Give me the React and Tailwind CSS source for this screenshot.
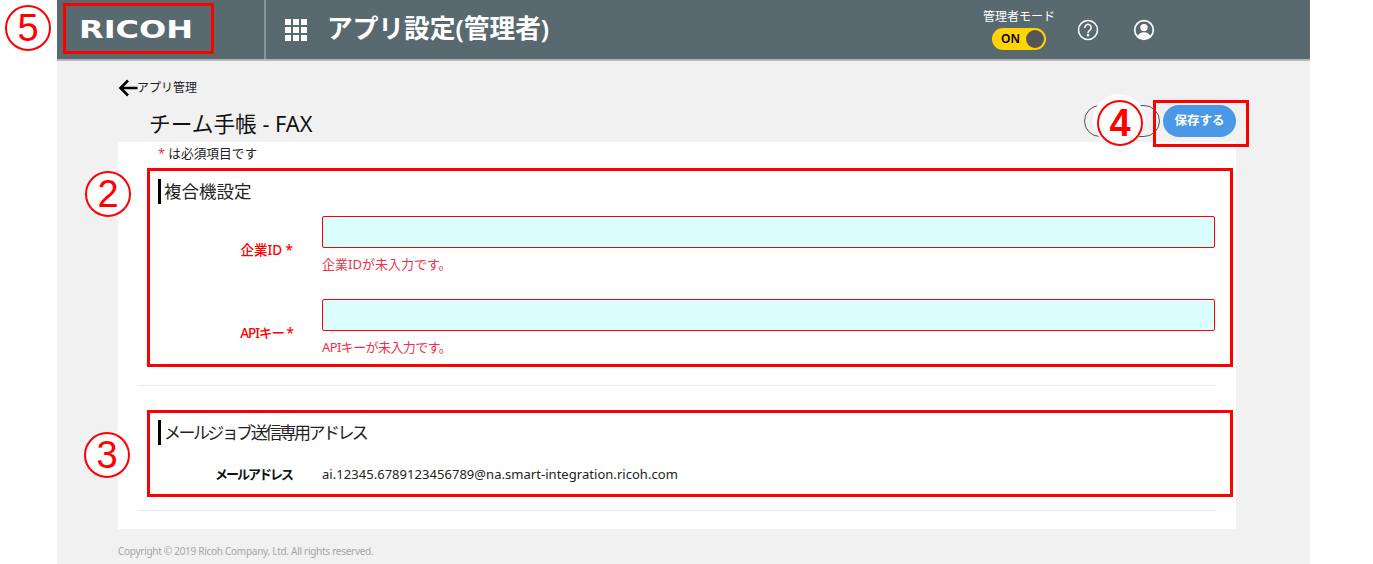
import React from "react";

const font = { fontFamily: '"Noto Sans", "Noto Sans CJK JP", sans-serif' };

function Badge({ n, className }) {
  return (
    <div className={`absolute flex items-center justify-center rounded-full border-2 border-[#ff0000] bg-white text-[#ff0000] w-[46px] h-[46px] text-[38px] leading-none ${className}`}
      style={{ fontFamily: '"Liberation Sans", sans-serif' }}>
      {n}
    </div>
  );
}

function SectionTitle({ children, className }) {
  return (
    <div className="flex items-center h-[25px]">
      <span className="w-[3px] h-[25px] bg-black" />
      <h2 className={`ml-[3px] leading-[25px] text-[#222] font-normal whitespace-nowrap ${className}`}>{children}</h2>
    </div>
  );
}

function Field({ label, error, labelClass, errorClass }) {
  return (
    <div className="flex">
      <label className={`w-[135px] pt-[24px] text-right text-[13.500px] leading-[20px] font-medium text-[#ff0000] ${labelClass}`}>{label} *</label>
      <div className="ml-[29px] flex-1">
        <div className="h-[32px] rounded-[2px] border border-[#ff0000] bg-[#dbfeff]" />
        <p className={`mt-[5px] text-[13px] leading-[22px] text-[#f0304a] ${errorClass}`}>{error}</p>
      </div>
    </div>
  );
}

export default function App() {
  return (
    <div className="relative w-[1373px] h-[564px] overflow-hidden bg-white" style={font}>
      <div className="ml-[57px] w-[1253px] h-[564px] bg-[#f1f1f1]">
        <header className="flex items-center h-[61px] bg-[#586a70] border-b-2 border-[#b7b7b7]">
          <div className="w-[209px] h-full border-r-2 border-[#8a9396] flex items-center pl-[22px]">
            <span className="text-white text-[25px] font-bold leading-none scale-x-[1.28] origin-left" style={{ fontFamily: '"DejaVu Sans", sans-serif' }}>RICOH</span>
          </div>
          <svg className="ml-[19px]" width="22" height="22" viewBox="0 0 22 22" fill="#fff">
            <rect x="0" y="0" width="6" height="6" /><rect x="8" y="0" width="6" height="6" /><rect x="16" y="0" width="6" height="6" />
            <rect x="0" y="8" width="6" height="6" /><rect x="8" y="8" width="6" height="6" /><rect x="16" y="8" width="6" height="6" />
            <rect x="0" y="16" width="6" height="6" /><rect x="8" y="16" width="6" height="6" /><rect x="16" y="16" width="6" height="6" />
          </svg>
          <h1 className="ml-[20px] text-white text-[25.700px] font-semibold leading-none -mt-[2px]">アプリ設定(管理者)</h1>
          <div className="ml-auto flex items-center mr-[155px]">
            <div className="flex flex-col items-center w-[72px] translate-x-[1px]">
              <span className="text-white text-[12px] leading-[16px] whitespace-nowrap">管理者モード</span>
              <div className="mt-[3px] w-[54px] h-[22px] rounded-full bg-[#ffd400] flex items-center justify-between pl-[9px] pr-[2px]">
                <span className="text-[12px] font-semibold text-black leading-none">ON</span>
                <span className="w-[18px] h-[18px] rounded-full bg-[#55565a]" />
              </div>
            </div>
            <svg className="ml-[23px]" width="22" height="22" viewBox="0 0 22 22" fill="none" stroke="#fff" strokeWidth="1.5">
              <circle cx="11" cy="11" r="9.500" />
              <path d="M7.800 8.600a3.200 3.200 0 1 1 4.900 2.700c-1 .6-1.700 1.200-1.700 2.500" strokeLinecap="round" />
              <circle cx="11" cy="16.300" r="0.500" fill="#fff" />
            </svg>
            <svg className="ml-[34px]" width="22" height="22" viewBox="0 0 22 22">
              <circle cx="11" cy="11" r="9.300" fill="none" stroke="#fff" strokeWidth="1.700" />
              <circle cx="11" cy="8.600" r="3.700" fill="#fff" />
              <path d="M4.600 17.200c1-2.900 3.400-4 6.400-4s5.400 1.100 6.400 4a9 9 0 0 1-12.800 0z" fill="#fff" />
            </svg>
          </div>
        </header>

        <main className="pl-[61px] pr-[74px]">
          <div className="flex items-center h-[24px] mt-[15px]">
            <svg width="20" height="20" viewBox="0 0 20 20" fill="none" stroke="#000" strokeWidth="2.600">
              <path d="M19.500 10H3M10 2.500 2.500 10l7.500 7.500" />
            </svg>
            <span className="text-[12px] text-[#222] leading-none -ml-[1px]">アプリ管理</span>
          </div>
          <div className="flex items-center h-[32px] mt-[5px]">
            <h2 className="ml-[31px] mt-[6px] text-[21.700px] leading-none text-[#111] font-normal">チーム手帳 - FAX</h2>
            <div className="ml-auto flex gap-[3px]">
              <button className="w-[76px] h-[32px] rounded-full border border-[#555] bg-transparent" />
              <button className="w-[73px] h-[32px] rounded-full bg-[#4a98e8] text-white text-[12.500px] font-semibold">保存する</button>
            </div>
          </div>
          <div className="mt-[5px] h-[387px] bg-white pl-[20px] pr-[20px]">
            <p className="pl-[20px] pt-[1px] text-[12.700px] leading-[20px] text-[#222]"><span className="text-[#e8304a]">*</span> は必須項目です</p>
            <section className="mt-[5px] h-[199px] -mr-[17px] ml-[9px] border-[3px] border-[#ff0000] pl-[8px] pt-[8px] pr-[15px]">
              <SectionTitle className="text-[17.500px]">複合機設定</SectionTitle>
              <div className="mt-[12px] flex flex-col gap-[24px]">
                <Field label="企業ID" error="企業IDが未入力です。" />
                <Field label="APIキー" error="APIキーが未入力です。" labelClass="tracking-[-1px]" errorClass="tracking-[-0.600px]" />
              </div>
            </section>
            <div className="mt-[18px] border-t border-[#e8e8e8]" />
            <section className="mt-[24px] h-[87px] -mr-[17px] ml-[9px] border-[3px] border-[#ff0000] pl-[8px] pt-[7px]">
              <SectionTitle className="text-[17px] tracking-[-2.550px]">メールジョブ送信専用アドレス</SectionTitle>
              <div className="flex mt-[19px] text-[13px] leading-[20px]">
                <span className="w-[134px] text-right font-semibold text-[#111] tracking-[-2px]">メールアドレス</span>
                <span className="ml-[30px] text-[#222] tracking-[0.040px]">ai.12345.6789123456789@na.smart-integration.ricoh.com</span>
              </div>
            </section>
            <div className="mt-[13px] border-t border-[#e8e8e8]" />
          </div>
          <footer className="mt-[15px] text-[10px] leading-[14px] text-[#a5a5a5] tracking-[-0.280px]">Copyright © 2019 Ricoh Company, Ltd. All rights reserved.</footer>
        </main>
      </div>

      <div className="absolute left-[63px] top-[3px] w-[151px] h-[51px] border-[3px] border-[#ff0000]" />
      <div className="absolute left-[1153px] top-[100px] w-[96px] h-[47px] border-[3px] border-[#ff0000]" />
      <div className="absolute left-[1093px] top-[94px] w-[52px] h-[52px] rounded-full bg-white" />
      <Badge n="5" className="left-[5px] top-[5px]" />
      <Badge n="2" className="left-[85px] top-[171px]" />
      <Badge n="3" className="left-[84px] top-[432px]" />
      <Badge n="4" className="left-[1097px] top-[100px] font-bold" />
    </div>
  );
}
